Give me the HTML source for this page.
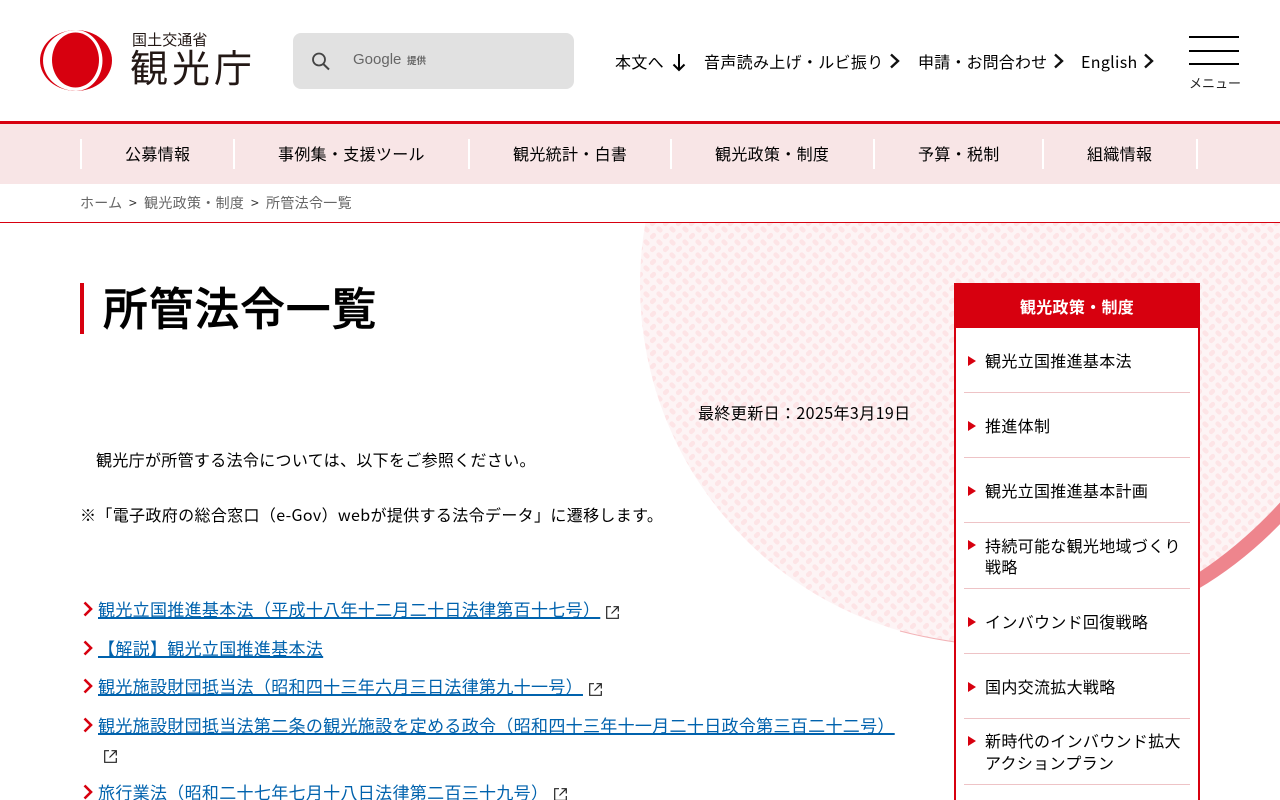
<!DOCTYPE html>
<html lang="ja">
<head>
<meta charset="utf-8">
<title>所管法令一覧</title>
<style>
html,body{margin:0;padding:0;background:#fff;height:800px;overflow:hidden;}
#w{width:1280px;height:800px;overflow:hidden;position:relative;font-family:"Noto Sans CJK JP","Liberation Sans",sans-serif;color:#000;font-size:16px;letter-spacing:.02em;}
.a{position:absolute;white-space:nowrap;line-height:22px;}
.s{position:absolute;width:2px;height:30px;top:139px;background:#fff;}
.n{position:absolute;top:142px;line-height:22px;white-space:nowrap;color:#000;}
.c{position:absolute;}
.l{position:absolute;left:98px;font-size:17px;line-height:24px;color:#0062ad;white-space:nowrap;text-decoration:underline;text-decoration-thickness:1.5px;text-underline-offset:1px;text-decoration-skip-ink:none;}
.t{position:absolute;left:985px;line-height:21.500px;width:205px;color:#000;}
.h{position:absolute;left:964px;width:226px;height:1px;background:#eec3c6;}
.r{position:absolute;left:968px;width:0;height:0;border-left:8.500px solid #d7000f;border-top:5px solid transparent;border-bottom:5px solid transparent;}
</style>
</head>
<body>
<div id="w">
<svg class="c" style="left:0;top:0" width="1280" height="800" viewBox="0 0 1280 800">
<defs>
<pattern id="p" width="13" height="13" patternUnits="userSpaceOnUse" x="640" y="223">
<rect width="13" height="13" fill="#fdf4f5"/>
<g fill="none" stroke="#fde4e6" stroke-width="4.600" stroke-linecap="round">
<path d="M5.700 5.700L7.300 7.300"/>
<path d="M0.800 -0.800L-0.800 0.800"/>
<path d="M13.800 -0.800L12.200 0.800"/>
<path d="M0.800 12.200L-0.800 13.800"/>
<path d="M13.800 12.200L12.200 13.800"/>
</g>
</pattern>
<clipPath id="cp"><rect x="0" y="223" width="1280" height="577"/></clipPath>
</defs>
<g clip-path="url(#cp)">
<circle cx="1000" cy="285" r="360" fill="url(#p)"/>
<path d="M1285 497Q1245 542 1198 573L1198 589Q1244 562 1285 519Z" fill="#ee858d"/>
<path d="M900 631Q927 638 955 642" fill="none" stroke="#f3b3b7" stroke-width="1"/>
</g>
<!-- logo -->
<ellipse cx="76" cy="60.500" rx="36" ry="30.500" fill="#d7000f"/>
<path d="M76 30A33 30.500 0 0 0 76 91A26.500 30.500 0 0 0 76 30Z" fill="#fff"/>
<ellipse cx="75.500" cy="60" rx="23.500" ry="27.500" fill="#d7000f"/>
<!-- search -->
<rect x="293" y="33" width="281" height="56" rx="8" fill="#e1e1e1"/>
<circle cx="319" cy="59.500" r="6" fill="none" stroke="#444" stroke-width="1.800"/>
<path d="M323.300 64L329 69.500" stroke="#444" stroke-width="2" fill="none"/>
<!-- arrows header -->
<path d="M679 54V70M673.500 64.500L679 70 684.500 64.500" fill="none" stroke="#000" stroke-width="2"/>
<g fill="none" stroke="#111" stroke-width="2.400">
<path d="M891 54.500L898 61 891 67.500"/>
<path d="M1055 54.500L1062 61 1055 67.500"/>
<path d="M1145 54.500L1152 61 1145 67.500"/>
</g>
<!-- hamburger -->
<rect x="1189" y="36" width="50" height="2" fill="#000"/>
<rect x="1189" y="50" width="50" height="2" fill="#000"/>
<rect x="1189" y="63" width="50" height="2" fill="#000"/>
<!-- link chevrons -->
<g fill="none" stroke="#d7000f" stroke-width="2.600">
<path d="M84.500 602.500L91 609 84.500 615.500"/>
<path d="M84.500 641.500L91 648 84.500 654.500"/>
<path d="M84.500 679.500L91 686 84.500 692.500"/>
<path d="M84.500 718.500L91 725 84.500 731.500"/>
<path d="M84.500 785.500L91 792 84.500 798.500"/>
</g>
<!-- external icons -->
<g fill="none" stroke="#222" stroke-width="1.200">
<path d="M611 606.700H606.700V618.300H618.300V614M613.500 606.700H618.300V611.500M618.300 606.700L611.500 613.500"/>
<path d="M594 683.700H589.700V695.300H601.300V691M596.500 683.700H601.300V688.500M601.300 683.700L594.500 690.500"/>
<path d="M109 750.700H104.700V762.300H116.300V758M111.500 750.700H116.300V755.500M116.300 750.700L109.500 757.500"/>
<path d="M559 788.700H554.700V800.300H566.300V796M561.500 788.700H566.300V793.500M566.300 788.700L559.500 795.500"/>
</g>
</svg>

<div class="a" style="left:132px;top:30px;font-size:15px;letter-spacing:.1px;line-height:20px;color:#231815;">国土交通省</div>
<div class="a" style="left:130px;top:41px;font-size:38px;line-height:50px;letter-spacing:4px;color:#231815;font-weight:400;">観光庁</div>

<div class="a" style="left:353px;top:49px;font-family:'Liberation Sans',sans-serif;font-size:15px;letter-spacing:0;color:#666;">Google</div>
<div class="a" style="left:407px;top:49px;font-size:9.500px;letter-spacing:0;color:#666;font-weight:700;">提供</div>

<div class="a" style="left:615px;top:50px;">本文へ</div>
<div class="a" style="left:704px;top:50px;">音声読み上げ・ルビ振り</div>
<div class="a" style="left:918px;top:50px;letter-spacing:.01em;">申請・お問合わせ</div>
<div class="a" style="left:1081px;top:50px;">English</div>
<div class="a" style="left:1189px;top:72px;font-size:13px;letter-spacing:0;color:#222;">メニュー</div>

<div class="c" style="left:0;top:121px;width:1280px;height:3px;background:#d7000f;"></div>
<div class="c" style="left:0;top:124px;width:1280px;height:60px;background:#f8e5e6;"></div>
<div class="s" style="left:80px"></div>
<div class="s" style="left:233px"></div>
<div class="s" style="left:468px"></div>
<div class="s" style="left:670px"></div>
<div class="s" style="left:873px"></div>
<div class="s" style="left:1042px"></div>
<div class="s" style="left:1196px"></div>
<div class="n" style="left:125px">公募情報</div>
<div class="n" style="left:278px">事例集・支援ツール</div>
<div class="n" style="left:513px">観光統計・白書</div>
<div class="n" style="left:715px">観光政策・制度</div>
<div class="n" style="left:918px">予算・税制</div>
<div class="n" style="left:1087px">組織情報</div>

<div class="a" style="left:80px;top:192px;font-size:14px;color:#666;letter-spacing:.02em;">ホーム</div>
<div class="a" style="left:129px;top:192px;font-size:14px;color:#333;">&gt;</div>
<div class="a" style="left:144px;top:192px;font-size:14px;color:#666;">観光政策・制度</div>
<div class="a" style="left:251px;top:192px;font-size:14px;color:#333;">&gt;</div>
<div class="a" style="left:266px;top:192px;font-size:14px;color:#666;">所管法令一覧</div>
<div class="c" style="left:0;top:222px;width:1280px;height:1px;background:#d7000f;"></div>

<div class="c" style="left:80px;top:283px;width:4px;height:51px;background:#d7000f;"></div>
<div class="a" style="left:103px;top:276px;font-size:44.800px;line-height:60px;font-weight:500;letter-spacing:.02em;-webkit-text-stroke:.6px #000;">所管法令一覧</div>

<div class="a" style="left:698px;top:401px;letter-spacing:.025em;">最終更新日：2025年3月19日</div>
<div class="a" style="left:96px;top:448px;">観光庁が所管する法令については、以下をご参照ください。</div>
<div class="a" style="left:80px;top:503px;letter-spacing:.022em;">※「電子政府の総合窓口（e-Gov）webが提供する法令データ」に遷移します。</div>

<a class="l" style="top:597px">観光立国推進基本法（平成十八年十二月二十日法律第百十七号）</a>
<a class="l" style="top:636px">【解説】観光立国推進基本法</a>
<a class="l" style="top:674px">観光施設財団抵当法（昭和四十三年六月三日法律第九十一号）</a>
<a class="l" style="top:713px">観光施設財団抵当法第二条の観光施設を定める政令（昭和四十三年十一月二十日政令第三百二十二号）</a>
<a class="l" style="top:780px">旅行業法（昭和二十七年七月十八日法律第二百三十九号）</a>

<div class="c" style="left:954px;top:283px;width:242px;height:530px;border:2px solid #d7000f;background:#fff;"></div>
<div class="c" style="left:954px;top:283px;width:246px;height:45px;background:#d7000f;color:#fff;font-weight:700;text-align:center;line-height:47px;font-size:16px;">観光政策・制度</div>

<div class="r" style="top:356px"></div><div class="t" style="top:350px">観光立国推進基本法</div><div class="h" style="top:392px"></div>
<div class="r" style="top:421px"></div><div class="t" style="top:415px">推進体制</div><div class="h" style="top:457px"></div>
<div class="r" style="top:486px"></div><div class="t" style="top:480px">観光立国推進基本計画</div><div class="h" style="top:522px"></div>
<div class="r" style="top:540px"></div><div class="t" style="top:534.500px">持続可能な観光地域づくり戦略</div><div class="h" style="top:588px"></div>
<div class="r" style="top:617px"></div><div class="t" style="top:611px">インバウンド回復戦略</div><div class="h" style="top:653px"></div>
<div class="r" style="top:682px"></div><div class="t" style="top:676px">国内交流拡大戦略</div><div class="h" style="top:718px"></div>
<div class="r" style="top:736px"></div><div class="t" style="top:730px">新時代のインバウンド拡大アクションプラン</div><div class="h" style="top:784px"></div>
</div>
</body>
</html>
